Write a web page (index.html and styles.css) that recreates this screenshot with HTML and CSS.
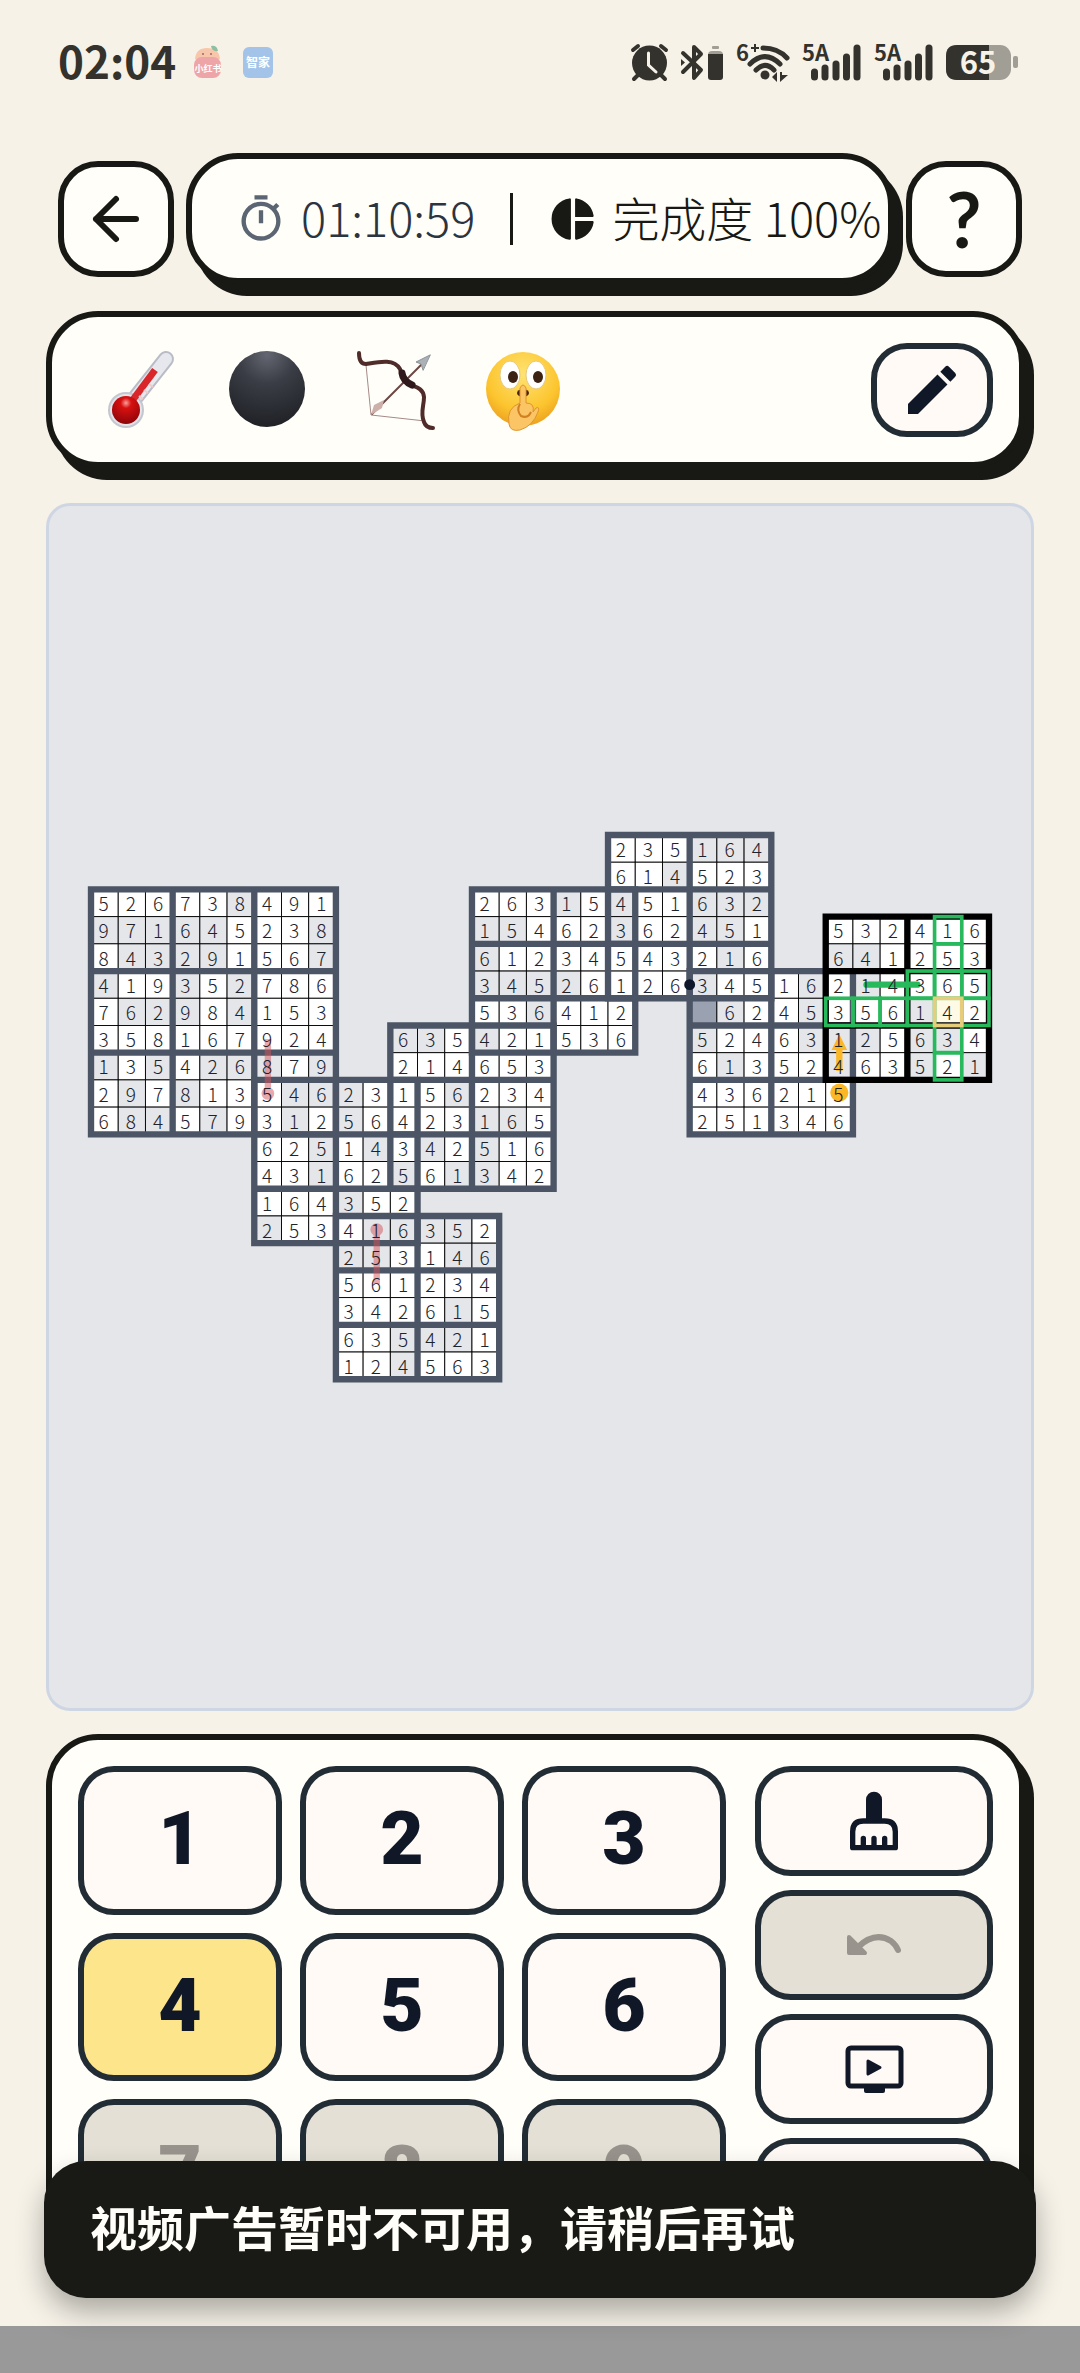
FILE: index.html
```html
<!DOCTYPE html>
<html lang="zh-CN">
<head>
    <meta charset="utf-8">
    <title>数独</title>
    <meta name="viewport" content="width=device-width, initial-scale=1.0">
    <link rel="stylesheet" href="styles.css">
</head>
<body>
<div class="status">
    <div class="status-left">
        <span class="clock">02:04</span>
        <svg class="app-icon" viewBox="0 0 30 34">
            <path d="M2 14Q3 3 14 3Q26 3 27 14Z" fill="#f8c6aa"/>
            <path d="M18 1Q24 0 25 6Q19 7 18 1Z" fill="#8fbf9f"/>
            <circle cx="10" cy="9" r="1" fill="#a06a60"/><circle cx="18" cy="9" r="1" fill="#a06a60"/>
            <rect x="1" y="12" width="27" height="21" rx="8" fill="#eea5a8"/>
            <text x="15" y="27" text-anchor="middle" font-size="9" font-weight="700" fill="#fff">小红书</text>
        </svg>
        <svg class="app-icon" viewBox="0 0 30 34">
            <rect x="0" y="2" width="30" height="31" rx="6" fill="#a3c4e8"/>
            <text x="15" y="22" text-anchor="middle" font-size="12" font-weight="700" fill="#fff">智家</text>
        </svg>
    </div>
    <div class="status-right">
        <svg width="37" height="37" viewBox="0 0 37 37">
            <circle cx="18.500" cy="19" r="17.500" fill="#33322d"/>
            <path d="M2 6L7 2M35 6L30 2M3 35L7 31M34 35L30 31" stroke="#33322d" stroke-width="4" stroke-linecap="round"/>
            <path d="M17.500 9V21L25 28" stroke="#f6f2e8" stroke-width="3" fill="none" stroke-linecap="round"/>
        </svg>
        <svg width="43" height="37" viewBox="0 0 43 37">
            <path d="M2 9L20 26L13 34V3L20 10L2 28" stroke="#33322d" stroke-width="4" fill="none" stroke-linejoin="round" stroke-linecap="round"/>
            <path d="M0 15L4 18.500L0 22Z" fill="#33322d"/>
            <rect x="31" y="2" width="7" height="3" rx="1" fill="#a19e96"/>
            <path d="M27 11Q27 7 31 7H38Q42 7 42 11Z" fill="#a19e96"/>
            <path d="M27 10H42V33Q42 36 39 36H30Q27 36 27 33Z" fill="#33322d"/>
        </svg>
        <svg width="52" height="37" viewBox="0 0 52 37">
            <g stroke="#33322d" stroke-width="5" fill="none" stroke-linecap="round">
                <path d="M26 4Q41 4 50 14"/>
                <path d="M13 20Q28 5 43 20"/>
                <path d="M19 26Q28 17 37 26"/>
            </g>
            <circle cx="28" cy="31" r="4.500" fill="#33322d"/>
            <path d="M40 28V38L35 33ZM43 28V38L51 31H45V28Z" fill="#33322d"/>
            <text x="-1" y="17" font-size="22" font-weight="700" fill="#33322d">6</text>
            <path d="M14 4H22M18 0V8" stroke="#33322d" stroke-width="2"/>
        </svg>
        <svg width="59" height="37" viewBox="0 0 59 37">
            <text x="0" y="17" font-size="22" font-weight="700" fill="#33322d">5A</text>
            <path d="M12.500 28V33M23 24V33M34 20V33M44.500 13V33M55 4V33" stroke="#33322d" stroke-width="7" stroke-linecap="round"/>
        </svg>
        <svg width="59" height="37" viewBox="0 0 59 37">
            <text x="0" y="17" font-size="22" font-weight="700" fill="#33322d">5A</text>
            <path d="M12.500 28V33M23 24V33M34 20V33M44.500 13V33M55 4V33" stroke="#33322d" stroke-width="7" stroke-linecap="round"/>
        </svg>
        <svg width="72" height="37" viewBox="0 0 72 37">
            <rect x="0" y="1" width="65" height="35" rx="11" fill="#a19e96"/>
            <path d="M43 1H11Q0 1 0 12V25Q0 36 11 36H43Z" fill="#33322d"/>
            <rect x="67" y="12" width="5" height="12" rx="2" fill="#a19e96"/>
            <text x="32" y="30" text-anchor="middle" font-size="31" font-weight="700" fill="#f6f2e8">65</text>
        </svg>
    </div>
</div>

<header class="header">
    <button class="square-btn" aria-label="返回">
        <svg width="48" height="48" viewBox="0 0 48 48" fill="none" stroke="#181914" stroke-width="6" stroke-linecap="round" stroke-linejoin="round">
            <path d="M44 24H4M24 4L4 24L24 44"/>
        </svg>
    </button>
    <div class="info panel">
        <svg class="timer-icon" viewBox="0 0 24 24" fill="#5b6573">
            <path d="M9 1h6v2H9zM11 8h2v6h-2z"/>
            <path d="M19.030 7.390l1.420-1.420c-.43-.51-.9-.99-1.410-1.410l-1.420 1.420A8.960 8.960 0 0 0 12 4a9 9 0 1 0 7.030 3.390zM12 20a7 7 0 1 1 0-14 7 7 0 0 1 0 14z"/>
        </svg>
        <span class="time">01:10:59</span>
        <span class="divider"></span>
        <svg class="pie-icon" viewBox="0 0 24 24" fill="#181914">
            <path d="M11 2.500V21.500Q10.800 22 10.300 21.900A10 10 0 0 1 10.300 2.100Q10.800 2 11 2.500ZM13 2.500Q13.200 2 13.700 2.100A10 10 0 0 1 21.900 10.300Q22 10.800 21.500 11H13ZM13 13H21.500Q22 13.200 21.900 13.700A10 10 0 0 1 13.700 21.900Q13.200 22 13 21.500Z"/>
        </svg>
        <span class="progress">完成度 100%</span>
    </div>
    <button class="square-btn help" aria-label="帮助">?</button>
</header>

<section class="rules panel">
    <div class="rule-icons">
        <svg width="80" height="80" viewBox="0 0 80 80">
            <defs>
                <radialGradient id="bulb" cx=".5" cy=".25" r=".75">
                    <stop offset="0" stop-color="#f9a09a"/><stop offset=".25" stop-color="#d81010"/><stop offset="1" stop-color="#8d0509"/>
                </radialGradient>
            </defs>
            <path d="M66 9L28 57" stroke="#b9bcc6" stroke-width="16" stroke-linecap="round"/>
            <path d="M66 9L28 57" stroke="#e6e8ee" stroke-width="12" stroke-linecap="round"/>
            <circle cx="26" cy="60" r="18" fill="#c5c7cf"/>
            <circle cx="26" cy="60" r="16" fill="#e3e4ea"/>
            <path d="M55 20L32 51" stroke="#d8262a" stroke-width="7"/>
            <path d="M49 34l4 3M44 40l4 3M39 46l4 3" stroke="#f0c9cb" stroke-width="2"/>
            <circle cx="26" cy="60" r="14" fill="url(#bulb)"/>
        </svg>
        <svg width="80" height="80" viewBox="0 0 80 80">
            <defs>
                <radialGradient id="ball" cx=".5" cy=".05" r=".95">
                    <stop offset="0" stop-color="#646671"/><stop offset=".4" stop-color="#3a3d45"/><stop offset="1" stop-color="#1f2126"/>
                </radialGradient>
            </defs>
            <circle cx="39" cy="39" r="38" fill="url(#ball)"/>
        </svg>
        <svg width="80" height="80" viewBox="0 0 80 80" fill="none" stroke-linecap="round">
            <path d="M10 15L15 65L69 71" stroke="#a58a88" stroke-width="1"/>
            <path d="M16 64L66 14" stroke="#6b4744" stroke-width="2"/>
            <path d="M74 5L60 12L65 14L67 20Z" fill="#aab0b6" stroke="#8d9399" stroke-width="1"/>
            <path d="M15 65L18 55L28 50L26 58Z" fill="#cdb0aa"/>
            <path d="M3 3Q3 14 10 14C22 12 38 8 44 19C46 24 46 30 51 33C58 37 67 37 68 47C68 56 64 63 68 72Q70 78 77 78" stroke="#4f2b2a" stroke-width="4"/>
            <path d="M46 23Q47 31 56 35" stroke="#2f191a" stroke-width="7"/>
        </svg>
        <svg width="80" height="80" viewBox="0 0 80 80">
            <defs>
                <radialGradient id="face" cx=".5" cy=".3" r=".75">
                    <stop offset="0" stop-color="#ffe372"/><stop offset=".65" stop-color="#fcc52f"/><stop offset="1" stop-color="#ea9a1c"/>
                </radialGradient>
            </defs>
            <circle cx="39" cy="39" r="37" fill="url(#face)"/>
            <ellipse cx="26" cy="25" rx="10" ry="14" fill="#fff" stroke="#e8c879"/>
            <ellipse cx="52" cy="25" rx="10" ry="14" fill="#fff" stroke="#e8c879"/>
            <ellipse cx="29" cy="27" rx="5" ry="6" fill="#3c2213"/>
            <ellipse cx="54" cy="27" rx="5" ry="6" fill="#3c2213"/>
            <ellipse cx="39" cy="43" rx="6" ry="4" fill="#49240f"/>
            <path d="M36 38Q39 32 42 38V53Q51 53 49 62L52 58Q56 56 54 62Q49 76 36 80Q26 82 25 74Q22 58 36 53Z" fill="#fbc566" stroke="#df942b"/>
            <path d="M36 54Q32 60 37 66Q44 69 47 62" fill="none" stroke="#d08020" stroke-width="2"/>
        </svg>
    </div>
    <button class="tool-btn edit" aria-label="笔记">
        <svg width="64" height="64" viewBox="0 0 24 24" fill="#101828">
            <path d="M3 17.250V21h3.750L17.810 9.940l-3.750-3.750L3 17.250zM20.710 7.040a1 1 0 0 0 0-1.410l-2.340-2.340a1 1 0 0 0-1.410 0l-1.830 1.830 3.750 3.750 1.830-1.830z"/>
        </svg>
    </button>
</section>

<main class="board">
    <svg id="sudoku" class="sudoku" viewBox="0 0 990 600"></svg>
</main>

<section class="keypad panel">
    <div class="keys">
        <button class="key">1</button>
        <button class="key">2</button>
        <button class="key">3</button>
        <button class="key active">4</button>
        <button class="key">5</button>
        <button class="key">6</button>
        <button class="key" disabled>7</button>
        <button class="key" disabled>8</button>
        <button class="key" disabled>9</button>
    </div>
    <div class="tools">
        <button class="tool-btn" aria-label="清除">
            <svg width="64" height="64" viewBox="0 0 24 24">
                <path d="M9 12V4a3 3 0 0 1 6 0V12Z" fill="#101828"/>
                <path d="M8 12H16Q20 12 20 16V22H4V16Q4 12 8 12ZM8 22V18.500M12 22V18.500M16 22V18.500" fill="none" stroke="#101828" stroke-width="2" stroke-linecap="round" stroke-linejoin="round"/>
            </svg>
        </button>
        <button class="tool-btn" disabled aria-label="撤销">
            <svg width="56" height="56" viewBox="0 0 56 56">
                <path d="M12 30Q29 14 45 24Q50 28 52 33" fill="none" stroke="#98948d" stroke-width="6" stroke-linecap="round"/>
                <path d="M3 20L19 36H3Z" fill="#98948d" stroke="#98948d" stroke-width="4" stroke-linejoin="round"/>
            </svg>
        </button>
        <button class="tool-btn" aria-label="视频提示">
            <svg width="58" height="50" viewBox="0 0 58 50">
                <rect x="3" y="4" width="53" height="38" rx="3" fill="none" stroke="#101828" stroke-width="5"/>
                <path d="M19 42H40V47Q40 49 38 49H21Q19 49 19 47Z" fill="#101828"/>
                <path d="M23 17L35 23.500L23 30Z" fill="#101828" stroke="#101828" stroke-width="3" stroke-linejoin="round"/>
            </svg>
        </button>
        <button class="tool-btn" aria-label="更多"></button>
    </div>
</section>

<div class="nav-bar"></div>
<div class="toast" role="status">视频广告暂时不可用，请稍后再试</div>

<script src="script.js"></script>
</body>
</html>
```
FILE: styles.css
```css
* {
    box-sizing: border-box;
}

body {
    display: flex;
    flex-direction: column;
    min-height: 100vh;
    margin: 0;
    background: #f6f2e8;
    color: #181914;
    font-family: "Noto Sans CJK SC", "Noto Sans", sans-serif;
}

button {
    display: flex;
    align-items: center;
    justify-content: center;
    margin: 0;
    padding: 0;
    font-family: Roboto, sans-serif;
    cursor: pointer;
}

svg {
    flex: none;
    overflow: visible;
}

.status {
    display: flex;
    align-items: center;
    justify-content: space-between;
    height: 124px;
    margin-bottom: 29px;
    padding: 0 62px 0 58px;
}

.status-left,
.status-right {
    display: flex;
    align-items: center;
}

.status-right {
    gap: 13px;
}

.clock {
    margin-right: 17px;
    padding-bottom: 4px;
    color: #33322d;
    font-size: 44px;
    font-weight: 700;
    line-height: 60px;
}

.app-icon {
    width: 30px;
    height: 34px;
    margin-right: 20px;
}

.panel {
    border: 6px solid #181914;
    border-radius: 52px;
    background: #fffef9;
    box-shadow: 9px 12px 0 #181914;
}

.header {
    display: flex;
    align-items: center;
    gap: 12px;
    margin: 0 58px 27px;
}

.square-btn {
    flex: none;
    width: 116px;
    height: 116px;
    border: 6px solid #181914;
    border-radius: 40px;
    background: #fffef9;
    color: #181914;
}

.help {
    font-family: Lato, sans-serif;
    font-size: 76px;
    font-weight: 700;
}

.info {
    display: flex;
    flex: 1;
    align-items: center;
    height: 131px;
    padding-left: 43px;
    font-size: 47px;
    font-weight: 300;
    line-height: 60px;
    white-space: nowrap;
}

.time,
.progress {
    padding-bottom: 4px;
}

.timer-icon {
    width: 52px;
    height: 52px;
    margin-right: 14px;
}

.time {
    color: #2b3441;
}

.divider {
    width: 3px;
    height: 52px;
    margin: 0 35px;
    background: #181914;
}

.pie-icon {
    width: 50px;
    height: 50px;
    margin-right: 14px;
}

.rules {
    display: flex;
    align-items: center;
    justify-content: space-between;
    height: 157px;
    margin: 0 55px 35px 46px;
    padding: 0 26px 0 48px;
}

.rule-icons {
    display: flex;
    gap: 48px;
}

.tool-btn {
    border: 6px solid #222c34;
    border-radius: 36px;
    background: #fffaf5;
}

.edit {
    width: 122px;
    height: 94px;
}

.board {
    display: flex;
    flex: 1;
    align-items: center;
    margin: 0 46px 23px;
    padding: 0 42px;
    border: 3px solid #cfd6e3;
    border-radius: 24px;
    background: #e4e6ea;
}

.sudoku {
    width: 100%;
    flex: 1;
}

.cell {
    fill: #ffffff;
}

.cell.given {
    fill: #e4e6ea;
}

.cell.empty {
    fill: #9aa1b1;
}

.cell.selected {
    fill: #fefae5;
}

.thin {
    fill: none;
    stroke: #000000;
    stroke-width: 1;
}

.frame {
    fill: none;
    stroke: #4b5565;
    stroke-width: 7;
    stroke-linecap: square;
}

.frame.current {
    stroke: #000000;
}

.peer {
    fill: none;
    stroke: #27b95c;
    stroke-width: 4;
}

.peer.selected {
    stroke: #e6cd7c;
}

.thermo {
    fill: #d4545c;
    stroke: #d4545c;
    opacity: 0.5;
}

.arrow {
    fill: #fbb726;
    stroke: #fbb726;
}

.whisper {
    stroke: #27b95c;
    stroke-width: 7;
    stroke-linecap: round;
}

.dot {
    fill: #0f172a;
}

.digit {
    fill: #1d222b;
    font-size: 21px;
    font-weight: 300;
    text-anchor: middle;
}

.keypad {
    display: flex;
    gap: 29px;
    height: 546px;
    margin: 0 55px 46px 46px;
    padding: 26px;
}

.keys {
    display: grid;
    flex: 1;
    grid-template-columns: repeat(3, 1fr);
    grid-template-rows: repeat(3, 1fr);
    gap: 18px;
}

.key {
    padding-bottom: 4px;
    border: 6px solid #222c34;
    border-radius: 36px;
    background: #fffaf5;
    color: #101828;
    font-size: 75px;
    font-weight: 900;
}

.key.active {
    background: #fce58b;
}

.key:disabled,
.tool-btn:disabled {
    background: #e4e0d6;
    color: #98948d;
}

.tools {
    display: grid;
    grid-template-rows: repeat(4, 1fr);
    gap: 14px;
    width: 238px;
}

.nav-bar {
    height: 47px;
    background: #999999;
}

.toast {
    position: fixed;
    right: 44px;
    bottom: 75px;
    left: 44px;
    padding: 30px 46px 37px;
    border-radius: 42px;
    background: #191a15;
    box-shadow: 0 14px 28px rgba(0, 0, 0, 0.3);
    color: #fffef9;
    font-size: 47px;
    font-weight: 700;
    line-height: 70px;
}
```
FILE: script.js
```js
const SIZE = 30;

// col/row: top-left cell, box: [width, height], mask: 1 = given, 2 = empty
const grids = [
    { col: 0, row: 2, size: 9, box: [3, 3],
      digits: ['526738491', '971645238', '843291567', '419352786', '762984153', '358167924', '135426879', '297813546', '684579312'],
      mask: ['000001000', '111110001', '011110001', '100101000', '011101000', '000000000', '101011101', '010100011', '011010010'] },
    { col: 6, row: 9, size: 6, box: [3, 2],
      digits: ['546231', '312564', '625143', '431625', '164352', '253416'],
      mask: ['011100', '010100', '001010', '001001', '000100', '100011'] },
    { col: 11, row: 7, size: 6, box: [3, 2],
      digits: ['635421', '214653', '156234', '423165', '342516', '561342'],
      mask: ['110100', '000000', '001000', '000110', '010100', '101100'] },
    { col: 9, row: 14, size: 6, box: [3, 2],
      digits: ['416352', '253146', '561234', '342615', '635421', '124563'],
      mask: ['011110', '110011', '000000', '000010', '001110', '001000'] },
    { col: 14, row: 2, size: 6, box: [3, 2],
      digits: ['263154', '154623', '612345', '345261', '536412', '421536'],
      mask: ['000101', '110001', '100000', '111100', '001000', '100000'] },
    { col: 19, row: 0, size: 6, box: [3, 2],
      digits: ['235164', '614523', '451632', '362451', '543216', '126345'],
      mask: ['000111', '001000', '100111', '100110', '000010', '000100'] },
    { col: 22, row: 5, size: 6, box: [3, 2],
      digits: ['345162', ' 62453', '524631', '613524', '436215', '251346'],
      mask: ['100010', '210010', '100011', '010001', '000000', '000000'] },
    { col: 27, row: 3, size: 6, box: [3, 2], current: true,
      digits: ['532416', '641253', '214365', '356142', '125634', '463521'],
      mask: ['000000', '110000', '010000', '000100', '110110', '100101'] }
];

const selected = { col: 31, row: 6 };
const names = ['', 'given', 'empty'];
const cells = {};
let cellLayer = '';
let frameLayer = '';
let peerLayer = '';
let digitLayer = '';

grids.forEach(grid => {
    grid.digits.forEach((line, r) => {
        [...line].forEach((digit, c) => {
            const col = grid.col + c;
            const row = grid.row + r;
            cells[col + ',' + row] = { col, row, digit, type: names[grid.mask[r][c]] };
        });
    });

    const x = grid.col * SIZE;
    const y = grid.row * SIZE;
    const length = grid.size * SIZE;
    let path = '';
    for (let c = 0; c <= grid.size; c += grid.box[0]) {
        path += `M${x + c * SIZE} ${y}v${length}`;
    }
    for (let r = 0; r <= grid.size; r += grid.box[1]) {
        path += `M${x} ${y + r * SIZE}h${length}`;
    }
    frameLayer += `<path class="frame ${grid.current ? 'current' : ''}" d="${path}"/>`;
});

function cellRect(col, row, name) {
    return `<rect class="${name}" x="${col * SIZE}" y="${row * SIZE}" width="${SIZE}" height="${SIZE}"/>`;
}

Object.values(cells).forEach(({ col, row, digit, type }) => {
    const isSelected = col === selected.col && row === selected.row;
    cellLayer += cellRect(col, row, 'cell ' + (isSelected ? 'selected' : type));
    cellLayer += cellRect(col, row, 'thin');
    if (digit !== ' ') {
        digitLayer += `<text class="digit" x="${col * SIZE + 14}" y="${row * SIZE + 24}">${digit}</text>`;
    }

    // same row, column or box as the selected cell
    const inGrid = col >= 27 && row >= 3 && row <= 8;
    const inBox = col >= 30 && row >= 5 && row <= 6;
    if (inGrid && !isSelected && (col === selected.col || row === selected.row || inBox)) {
        peerLayer += cellRect(col, row, 'peer');
    }
});
peerLayer += cellRect(selected.col, selected.row, 'peer selected');

function thermo(col, from, to) {
    const x = col * SIZE + 15;
    const y1 = from * SIZE + 15;
    const y2 = to * SIZE + 15;
    return `<g class="thermo"><circle cx="${x}" cy="${y1}" r="7" stroke="none"/>
        <path d="M${x} ${y1}V${y2}" stroke-width="7"/></g>`;
}

const markers = thermo(6, 9, 7) + thermo(10, 14, 16) + `
    <g class="arrow">
        <circle cx="825" cy="284" r="10" stroke="none"/>
        <path d="M825 260V234" stroke-width="7"/>
        <path d="M825 222L832 236H818Z" stroke-width="2"/>
    </g>
    <path class="whisper" d="M855 165H911"/>
    <circle class="dot" cx="660" cy="165" r="6"/>`;

document.getElementById('sudoku').innerHTML = cellLayer + frameLayer + peerLayer + markers + digitLayer;
```
